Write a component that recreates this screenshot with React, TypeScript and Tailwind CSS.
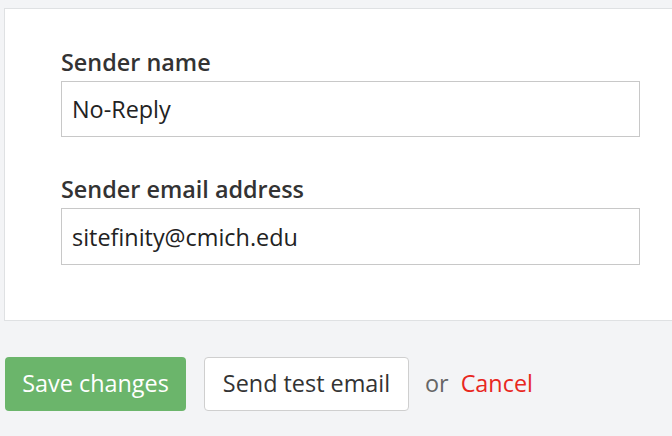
export default function App() {
  return (
    <div className="min-h-screen w-[672px] h-[436px] overflow-hidden bg-[#f3f4f6] pt-2 pl-[4px] font-['Open_Sans',sans-serif] text-[#333]">
      <div className="w-[700px] h-[313px] bg-white border border-[#dfe1e3] pl-[56px] pt-[38px]">
        <div className="flex flex-col w-[579px]">
          <label className="mb-[3px] text-[23.4px] font-semibold leading-[31px] text-[#333]">Sender name</label>
          <input
            readOnly
            value="No-Reply"
            className="h-[56px] border border-[#c8c8c8] px-[10px] text-[23.4px] text-[#222] outline-none"
          />
          <label className="mt-[37px] mb-[3px] text-[23.4px] font-semibold leading-[31px] text-[#333]">Sender email address</label>
          <input
            readOnly
            value="sitefinity@cmich.edu"
            className="h-[57px] border border-[#c8c8c8] px-[10px] text-[23.4px] text-[#222] outline-none"
          />
        </div>
      </div>
      <div className="flex items-center mt-[36px] pl-[1px]">
        <button className="h-[54px] w-[181px] rounded-[4px] bg-[#6bb56b] text-white text-[23.4px]">Save changes</button>
        <button className="ml-[18px] h-[54px] w-[205px] rounded-[4px] bg-white border border-[#cfcfcf] text-[#333] text-[23.4px]">Send test email</button>
        <span className="ml-[16px] text-[23.4px] text-[#666]">or</span>
        <a className="ml-[12px] text-[23.4px] text-[#e8271e]">Cancel</a>
      </div>
    </div>
  );
}
